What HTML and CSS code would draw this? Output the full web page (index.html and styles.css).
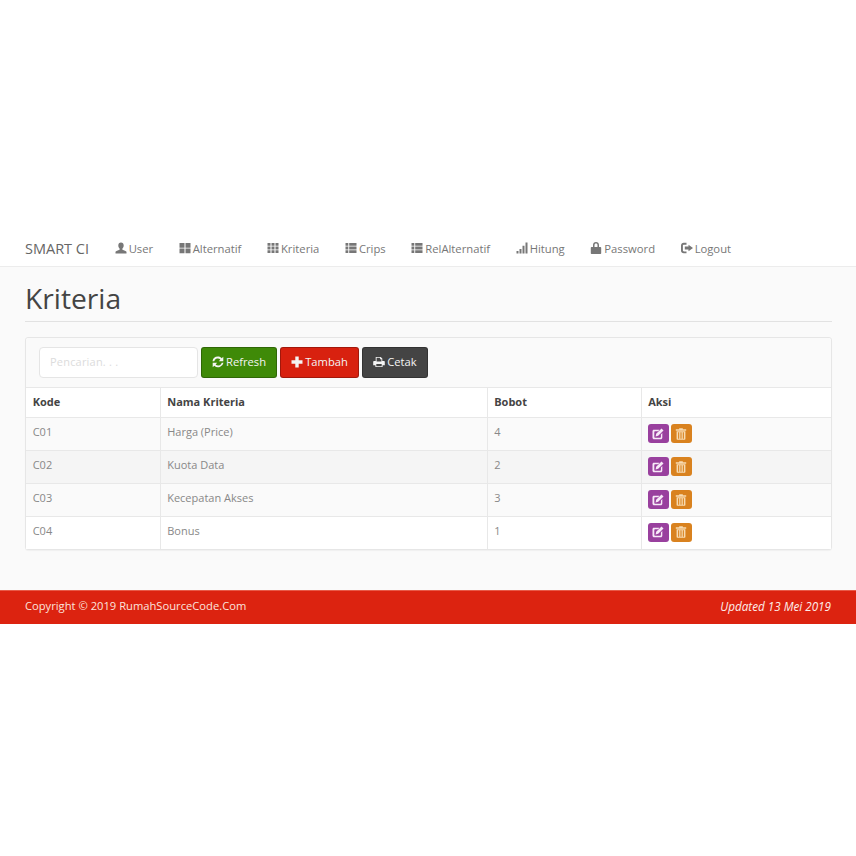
FILE: index.html
```html
<!DOCTYPE html>
<html lang="id">
<head>
<meta charset="utf-8">
<title>Kriteria</title>
<link rel="stylesheet" href="styles.css">
</head>
<body>
<svg class="defs" width="0" height="0" aria-hidden="true">
  <defs>
    <symbol id="i-user" viewBox="0 0 12 12"><path d="M6 .5c1.7 0 2.700 1.200 2.700 3 0 1.300-.6 2.500-1.300 3.100v1.100c1.800.5 3.600 1.200 4.100 2v1.800H.5V9.700c.5-.8 2.300-1.500 4.100-2V6.600C3.900 6 3.300 4.800 3.300 3.500 3.300 1.700 4.300.5 6 .5z"/></symbol>
    <symbol id="i-large" viewBox="0 0 12 12"><path d="M.5 1h5v4.700h-5zM6.500 1h5v4.700h-5zM.5 6.500h5v4.700h-5zM6.500 6.500h5v4.700h-5z"/></symbol>
    <symbol id="i-th" viewBox="0 0 12 12"><path d="M.5 1h3v2.800h-3zM4.500 1h3v2.800h-3zM8.500 1h3v2.800h-3zM.5 4.600h3v2.800h-3zM4.500 4.600h3v2.800h-3zM8.500 4.600h3v2.800h-3zM.5 8.200h3V11h-3zM4.500 8.200h3V11h-3zM8.500 8.200h3V11h-3z"/></symbol>
    <symbol id="i-list" viewBox="0 0 12 12"><path d="M.5 1h2.800v2.800H.5zM4.200 1h7.300v2.800H4.200zM.5 4.600h2.800v2.800H.5zM4.200 4.600h7.300v2.800H4.200zM.5 8.200h2.800V11H.5zM4.200 8.200h7.300V11H4.200z"/></symbol>
    <symbol id="i-signal" viewBox="0 0 12 12"><path d="M.5 9h2v2.500h-2zM3.500 7h2v4.500h-2zM6.500 3.800h2v7.700h-2zM9.500.5h2v11h-2z"/></symbol>
    <symbol id="i-lock" viewBox="0 0 12 12"><path fill-rule="evenodd" d="M3 5V3C3 1.300 4.200 0 6 0s3 1.300 3 3v2h1.500c.4 0 .7.300.7.700v5.500c0 .4-.3.800-.7.800h-9c-.4 0-.7-.4-.7-.8V5.700c0-.4.300-.7.700-.7zm1.500 0h3V3.100C7.500 2.100 7 1.500 6 1.500s-1.500.6-1.500 1.600z"/></symbol>
    <symbol id="i-logout" viewBox="0 0 12 12"><path d="M5.500 .8v1.900H3c-.7 0-1.100.4-1.100 1v4.600c0 .7.4 1.100 1.100 1.100h2.500v1.900H2.800C1.100 11.300 0 10.200 0 8.500V3.600C0 1.900 1.100.8 2.800.8z"/><path d="M7.500 2.800 12 6l-4.500 3.200V7.400H3.800V4.600h3.700z"/></symbol>
    <symbol id="i-refresh" viewBox="0 0 12 12"><path d="M6 .6c1.500 0 2.800.6 3.700 1.600L11.300.7v4.500H6.800l1.600-1.600A3.700 3.700 0 0 0 2.200 5.200H.5A5.500 5.500 0 0 1 6 .6zM.7 6.800h4.500L3.600 8.400a3.700 3.700 0 0 0 6.200-1.600h1.700a5.500 5.500 0 0 1-9.200 3L.7 11.300z"/></symbol>
    <symbol id="i-plus" viewBox="0 0 12 12"><path d="M4.300.5h3.400v3.800h3.800v3.400H7.700v3.800H4.300V7.700H.5V4.300h3.800z"/></symbol>
    <symbol id="i-print" viewBox="0 0 12 12"><path fill-rule="evenodd" d="M2.700 1h5L9.300 2.600V5h1.500c.6 0 1 .4 1 1v3.300H9.600V11H2.400V9.300H.2V6c0-.6.4-1 1-1h1.500zm.9.800v3.600h4.800V3.200H7.100V1.800zM3.300 7.900v2.300h5.400V7.900z"/></symbol>
    <symbol id="i-edit" viewBox="0 0 12 12"><path d="M1.800 1.800h5.700L6.200 3.200H3c-.4 0-.7.300-.7.700v5.200c0 .4.300.7.700.7h5.200c.4 0 .7-.3.700-.7V6.400L10.300 5v4.700c0 .9-.7 1.500-1.500 1.500H2.300c-1.100 0-1.800-.6-1.800-1.500V3.300c0-.9.500-1.500 1.300-1.500z"/><path d="M9.500.5l2 2-5.300 5.300-2.600.6.600-2.600z"/></symbol>
    <symbol id="i-trash" viewBox="0 0 12 12"><path fill-rule="evenodd" d="M4.200 1.200V.2h3.600v1h3.400v1.500H.8V1.200zM1.600 3.300h8.800V11c0 .5-.3.800-.7.800H2.300c-.4 0-.7-.3-.7-.8zm1.500 1v6.400h1.100V4.300zm2.350 0v6.400h1.100V4.300zm2.350 0v6.400h1.100V4.300z"/></symbol>
  </defs>
</svg>

<div class="page">
  <nav class="navbar">
    <a class="brand">SMART CI</a>
    <a class="nav-link"><svg class="ico"><use href="#i-user"/></svg>User</a>
    <a class="nav-link"><svg class="ico"><use href="#i-large"/></svg>Alternatif</a>
    <a class="nav-link"><svg class="ico"><use href="#i-th"/></svg>Kriteria</a>
    <a class="nav-link"><svg class="ico"><use href="#i-list"/></svg>Crips</a>
    <a class="nav-link"><svg class="ico"><use href="#i-list"/></svg>RelAlternatif</a>
    <a class="nav-link"><svg class="ico"><use href="#i-signal"/></svg>Hitung</a>
    <a class="nav-link"><svg class="ico"><use href="#i-lock"/></svg>Password</a>
    <a class="nav-link"><svg class="ico"><use href="#i-logout"/></svg>Logout</a>
  </nav>

  <main class="content">
    <h1 class="title">Kriteria</h1>
    <section class="panel">
      <div class="toolbar">
        <input class="search" type="text" placeholder="Pencarian. . .">
        <a class="btn btn-green"><svg class="ico"><use href="#i-refresh"/></svg>Refresh</a>
        <a class="btn btn-red"><svg class="ico"><use href="#i-plus"/></svg>Tambah</a>
        <a class="btn btn-dark"><svg class="ico"><use href="#i-print"/></svg>Cetak</a>
      </div>
      <table class="table">
        <colgroup><col class="c1"><col class="c2"><col class="c3"><col class="c4"></colgroup>
        <thead><tr><th>Kode</th><th>Nama Kriteria</th><th>Bobot</th><th>Aksi</th></tr></thead>
        <tbody>
          <tr><td>C01</td><td>Harga (Price)</td><td>4</td><td class="acts"><a class="mini purple"><svg><use href="#i-edit"/></svg></a><a class="mini orange"><svg><use href="#i-trash"/></svg></a></td></tr>
          <tr><td>C02</td><td>Kuota Data</td><td>2</td><td class="acts"><a class="mini purple"><svg><use href="#i-edit"/></svg></a><a class="mini orange"><svg><use href="#i-trash"/></svg></a></td></tr>
          <tr><td>C03</td><td>Kecepatan Akses</td><td>3</td><td class="acts"><a class="mini purple"><svg><use href="#i-edit"/></svg></a><a class="mini orange"><svg><use href="#i-trash"/></svg></a></td></tr>
          <tr><td>C04</td><td>Bonus</td><td>1</td><td class="acts"><a class="mini purple"><svg><use href="#i-edit"/></svg></a><a class="mini orange"><svg><use href="#i-trash"/></svg></a></td></tr>
        </tbody>
      </table>
    </section>
  </main>

  <footer class="footer">
    <span>Copyright © 2019 RumahSourceCode.Com</span>
    <em>Updated 13 Mei 2019</em>
  </footer>
</div>
</body>
</html>
```
FILE: styles.css
```css
* { box-sizing: border-box; }
html, body { margin: 0; padding: 0; background: #fff; }
body { font-family: "Open Sans", "Liberation Sans", sans-serif; font-size: 11px; color: #777; }
.defs { position: absolute; }
.page { padding-top: 232px; }

.navbar { height: 35px; display: flex; align-items: center; padding: 0 25px 2px; background: #fff; border-bottom: 1px solid #ececec; gap: 25.6px; }
.brand { font-size: 14.5px; color: #666; }
.nav-link { display: flex; align-items: center; font-size: 11.25px; color: #777; white-space: nowrap; }
.ico { width: 12px; height: 12px; fill: currentColor; margin-right: 2px; flex: none; }

.content { background: #fafafa; height: 323px; padding: 0 24px 0 25px; }
.title { margin: 0; height: 55px; padding-top: 13px; font-size: 28.2px; line-height: 37px; font-weight: 400; color: #444; border-bottom: 1px solid #e2e2e2; }

.panel { margin-top: 15px; background: #fff; border: 1px solid #e6e6e6; border-radius: 3px; box-shadow: 0 1px 1px rgba(0,0,0,.04); }
.toolbar { display: flex; align-items: center; gap: 3px; height: 49px; padding: 9px 0 9px 13px; background: #fafafa; border-radius: 3px 3px 0 0; }
.search { width: 159px; height: 31px; padding: 0 10px 2px; border: 1px solid #e5e5e5; border-radius: 4px; background: #fff; font: 11px "Open Sans", sans-serif; letter-spacing: .2px; }
.search::placeholder { color: #dcdcdc; }

.btn { display: flex; align-items: center; justify-content: center; height: 31px; padding-bottom: 2px; border-radius: 3px; font-size: 11.2px; color: #f4f4f4; border: 1px solid rgba(0,0,0,.25); }
.btn-green { width: 76px; background: #3f8a08; }
.btn-red { width: 79px; background: #d8210f; }
.btn-dark { width: 66px; background: #444; }

.table { width: 100%; border-collapse: collapse; table-layout: fixed; font-size: 11px; }
.c1 { width: 134px; } .c2 { width: 327px; } .c3 { width: 154px; }
.table th, .table td { border: 1px solid #e8e8e8; padding: 0 7px 0 6.7px; text-align: left; }
.table tr > :first-child { border-left: 0; }
.table tr > :last-child { border-right: 0; }
.table tbody tr:last-child td { border-bottom: 0; }
.table th { height: 30px; padding-bottom: 2px; color: #444; font-weight: 700; background: #fff; }
.table td { height: 33px; color: #888; padding-bottom: 5px; }
.table tbody tr:last-child td { height: 32px; background: #fff; }
.table tbody tr:nth-child(odd) td { background: #fafafa; }
.table tbody tr:nth-child(2) td { background: #f5f5f5; }
.table tbody tr:nth-child(4) td { background: #fff; }
.table td.acts { padding: 0 0 1px 6px; font-size: 0; }

.mini { display: inline-flex; align-items: center; justify-content: center; width: 21px; height: 19px; border-radius: 3px; vertical-align: middle; }
.mini + .mini { margin-left: 2px; }
.mini svg { width: 12px; height: 12px; }
.purple { background: #99409e; fill: #f7e9f8; }
.orange { background: #d9821f; fill: #f7dcb3; }

.footer { height: 34px; display: flex; justify-content: space-between; align-items: center; padding: 0 25px 4px; background: #dc2310; color: #fbe3de; font-size: 11.2px; border-top: 1px solid #e85a48; }
.footer em { font-style: italic; font-size: 11.7px; color: #fdeeea; }
```
